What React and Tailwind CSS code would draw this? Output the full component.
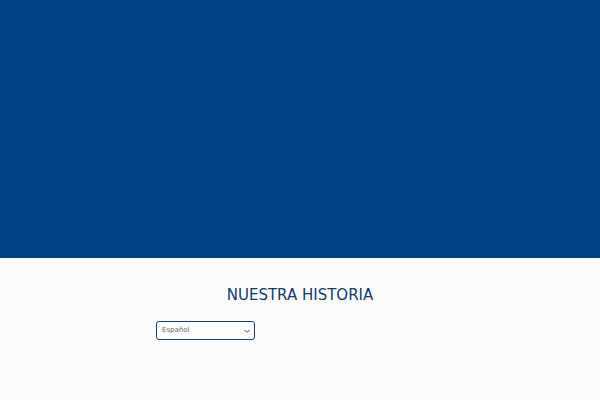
export default function App() {
  return (
    <div className="w-[600px] h-[400px] bg-[#fcfcfc] flex flex-col" style={{ fontFamily: '"DejaVu Sans", sans-serif' }}>
      <div className="h-[258px] bg-[#004385] shrink-0" />
      <div className="pt-[28px] flex flex-col items-center">
        <h1 className="text-[15px] leading-[19px] text-[#0d3d70]">NUESTRA HISTORIA</h1>
      </div>
      <div className="pt-[16px] pl-[156px]">
        <div className="w-[99px] h-[19px] border border-[#1b3c66] rounded-[3px] bg-white flex items-center justify-between pl-[5px] pr-[3px]">
          <span className="text-[7px] text-[#666]">Español</span>
          <svg width="8" height="8" viewBox="0 0 8 8" fill="none" stroke="#444" strokeWidth="1"><path d="M1.5 3l2.5 2.5L6.5 3" /></svg>
        </div>
      </div>
    </div>
  );
}
